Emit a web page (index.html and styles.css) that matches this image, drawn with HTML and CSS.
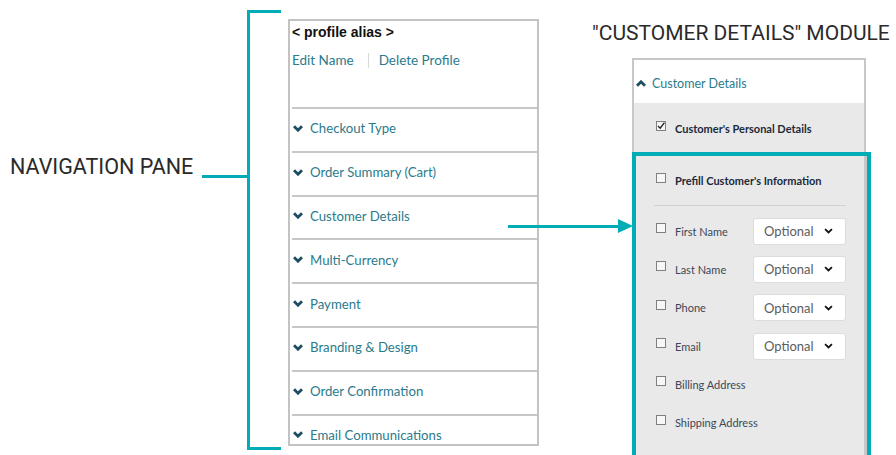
FILE: index.html
```html
<!DOCTYPE html>
<html lang="en">
<head>
  <meta charset="UTF-8" />
  <meta name="viewport" content="width=device-width, initial-scale=1.0"/>
  <title>Navigation Pane and Customer Details Module</title>
  <link rel="stylesheet" href="styles.css">
</head>
<body>
  <div class="stage">
    <div class="nav-label">NAVIGATION PANE</div>
    <div class="bracket"></div>

    <div class="nav-pane">
      <div class="profile">
        <div class="profile-alias">&lt; profile alias &gt;</div>
        <div class="profile-links">
          <a href="#">Edit Name</a>
          <span class="sep"></span>
          <a href="#">Delete Profile</a>
        </div>
      </div>
      <ul class="nav-list">
        <li><svg class="chev" viewBox="0 0 10 7"><path d="M1 1.2 L5 5.2 L9 1.2"/></svg>Checkout Type</li>
        <li><svg class="chev" viewBox="0 0 10 7"><path d="M1 1.2 L5 5.2 L9 1.2"/></svg>Order Summary (Cart)</li>
        <li><svg class="chev" viewBox="0 0 10 7"><path d="M1 1.2 L5 5.2 L9 1.2"/></svg>Customer Details</li>
        <li><svg class="chev" viewBox="0 0 10 7"><path d="M1 1.2 L5 5.2 L9 1.2"/></svg>Multi-Currency</li>
        <li><svg class="chev" viewBox="0 0 10 7"><path d="M1 1.2 L5 5.2 L9 1.2"/></svg>Payment</li>
        <li><svg class="chev" viewBox="0 0 10 7"><path d="M1 1.2 L5 5.2 L9 1.2"/></svg>Branding &amp; Design</li>
        <li><svg class="chev" viewBox="0 0 10 7"><path d="M1 1.2 L5 5.2 L9 1.2"/></svg>Order Confirmation</li>
        <li><svg class="chev" viewBox="0 0 10 7"><path d="M1 1.2 L5 5.2 L9 1.2"/></svg>Email Communications</li>
      </ul>
    </div>

    <div class="arrow"></div>

    <div class="module-col">
      <h2 class="module-title">"CUSTOMER DETAILS" MODULE</h2>
      <div class="module">
        <div class="module-head">
          <svg class="chev up" viewBox="0 0 10 7"><path d="M1 5.8 L5 1.8 L9 5.8"/></svg>
          Customer Details
        </div>
        <div class="module-body">
          <div class="check-row main"><span class="cb checked"><svg viewBox="0 0 10 10"><path d="M2 5 L4.2 7.2 L8.4 1.6"/></svg></span>Customer's Personal Details</div>
          <div class="highlight">
            <div class="highlight-inner">
              <div class="check-row prefill"><span class="cb"></span>Prefill Customer's Information</div>
              <div class="divider"></div>
              <div class="fields">
                <div class="field-row">
                  <span class="cb"></span><span class="field-name">First Name</span>
                  <div class="select">Optional<svg class="chev dark" viewBox="0 0 10 7"><path d="M1 1.2 L5 5.2 L9 1.2"/></svg></div>
                </div>
                <div class="field-row">
                  <span class="cb"></span><span class="field-name">Last Name</span>
                  <div class="select">Optional<svg class="chev dark" viewBox="0 0 10 7"><path d="M1 1.2 L5 5.2 L9 1.2"/></svg></div>
                </div>
                <div class="field-row">
                  <span class="cb"></span><span class="field-name">Phone</span>
                  <div class="select">Optional<svg class="chev dark" viewBox="0 0 10 7"><path d="M1 1.2 L5 5.2 L9 1.2"/></svg></div>
                </div>
                <div class="field-row">
                  <span class="cb"></span><span class="field-name">Email</span>
                  <div class="select">Optional<svg class="chev dark" viewBox="0 0 10 7"><path d="M1 1.2 L5 5.2 L9 1.2"/></svg></div>
                </div>
                <div class="field-row">
                  <span class="cb"></span><span class="field-name wide">Billing Address</span>
                </div>
                <div class="field-row">
                  <span class="cb"></span><span class="field-name wide">Shipping Address</span>
                </div>
              </div>
            </div>
          </div>
        </div>
      </div>
    </div>
  </div>
</body>
</html>
```

FILE: styles.css
```css
body {
  margin: 0;
  background: #fff;
  font-family: Lato, "Open Sans", sans-serif;
  color: #333;
}
.stage {
  position: relative;
  display: flex;
  align-items: flex-start;
  width: 896px;
  height: 455px;
  overflow: hidden;
}

/* annotations */
.nav-label {
  flex: 0 0 247px;
  box-sizing: border-box;
  padding: 156px 0 0 10px;
  font-family: Roboto, sans-serif;
  font-size: 21.5px;
  line-height: 21px;
  color: #2a2a2a;
  white-space: nowrap;
}
.bracket {
  position: relative;
  flex: 0 0 34px;
  box-sizing: border-box;
  height: 440px;
  margin-top: 10px;
  border: 3px solid #00adb6;
  border-right: none;
}
.bracket::before {
  content: "";
  position: absolute;
  left: -48px;
  top: 162px;
  width: 48px;
  height: 3px;
  background: #00adb6;
}
.arrow {
  position: absolute;
  left: 508px;
  top: 225px;
  width: 112px;
  height: 3px;
  background: #00adb6;
}
.arrow::after {
  content: "";
  position: absolute;
  right: -13px;
  top: -6px;
  border-left: 15px solid #00adb6;
  border-top: 7px solid transparent;
  border-bottom: 7px solid transparent;
}

/* navigation pane */
.nav-pane {
  flex: 0 0 251px;
  box-sizing: border-box;
  height: 427px;
  margin: 19px 0 0 7px;
  border: 2px solid #c3c3c3;
  overflow: hidden;
}
.profile {
  height: 86px;
  box-sizing: border-box;
  padding: 3px 0 0 2px;
}
.profile-alias {
  font-family: "Liberation Sans", Arial, sans-serif;
  font-weight: bold;
  font-size: 14px;
  line-height: 16px;
  color: #111;
}
.profile-links {
  display: flex;
  align-items: center;
  margin-top: 12px;
  height: 16px;
}
.profile-links a {
  font-size: 13.5px;
  color: #2a7b8c;
  text-decoration: none;
}
.sep {
  width: 1px;
  height: 15px;
  margin: 0 10px 0 14px;
  background: #d9d9d9;
}
.nav-list {
  list-style: none;
  margin: 0;
  padding: 0 0 0 2px;
}
.nav-list li {
  display: flex;
  align-items: center;
  box-sizing: border-box;
  height: 43.8px;
  padding: 0 0 3px 1px;
  border-top: 2px solid #c8c8c8;
  font-size: 13.2px;
  color: #2a7b8c;
  white-space: nowrap;
}
.chev {
  width: 10px;
  height: 7px;
  margin-right: 7px;
  flex: none;
}
.chev path {
  fill: none;
  stroke: #1d4d63;
  stroke-width: 2.8;
}

/* customer details module */
.module-col {
  flex: 0 0 300px;
  margin-left: 53px;
}
.module-title {
  margin: 21px 0 0;
  font-family: Roboto, sans-serif;
  font-weight: normal;
  font-size: 21px;
  line-height: 24px;
  color: #2a2a2a;
  white-space: nowrap;
}
.module {
  width: 234px;
  box-sizing: border-box;
  margin: 13px 0 0 40px;
  border: 2px solid #c8c8c8;
}
.module-head {
  display: flex;
  align-items: center;
  height: 43px;
  box-sizing: border-box;
  padding: 3px 0 0 2px;
  background: #fff;
  font-size: 12.5px;
  color: #2a7b8c;
}
.chev.up {
  margin-right: 6px;
}
.module-body {
  background: #e9e9e9;
}
.check-row {
  display: flex;
  align-items: center;
  height: 49px;
  box-sizing: border-box;
  font-weight: bold;
  font-size: 11px;
  color: #1c2a3b;
}
.check-row.main {
  padding: 2px 0 0 22px;
}
.check-row.prefill {
  padding-left: 20px;
}
.cb {
  flex: none;
  width: 10px;
  height: 10px;
  box-sizing: border-box;
  margin: 0 9px 6px 0;
  border: 1px solid #808080;
  background: #f7f7f7;
}
.cb svg {
  display: block;
  width: 10px;
  height: 10px;
  margin: -1px 0 0 -1px;
}
.cb svg path {
  fill: none;
  stroke: #222;
  stroke-width: 1.4;
}
.highlight {
  margin: 0 -7px 0 -2px;
  border: 4px solid #00adb6;
}
.highlight-inner {
  border-right: 2px solid #c8c8c8;
  padding-bottom: 30px;
}
.divider {
  height: 1px;
  margin: 0 19px 0 18px;
  background: #d2d2d2;
}
.fields {
  padding-top: 6px;
}
.field-row {
  display: grid;
  grid-template-columns: 10px 69px 93px;
  column-gap: 9px;
  align-items: center;
  height: 38.3px;
  padding-left: 20px;
  font-size: 11px;
  color: #3a4859;
}
.field-row .cb {
  margin: 0 0 6px;
}
.field-name.wide {
  grid-column: 2 / 4;
}
.select {
  display: flex;
  align-items: center;
  justify-content: space-between;
  height: 27px;
  box-sizing: border-box;
  padding: 0 12px 0 10px;
  background: #fff;
  border: 1px solid #dcdcdc;
  border-radius: 3px;
  font-size: 13px;
  color: #5c5c5c;
}
.select .chev {
  width: 9px;
  height: 6px;
  margin: 0;
}
.select .chev path {
  stroke: #111;
  stroke-width: 2;
}
```
